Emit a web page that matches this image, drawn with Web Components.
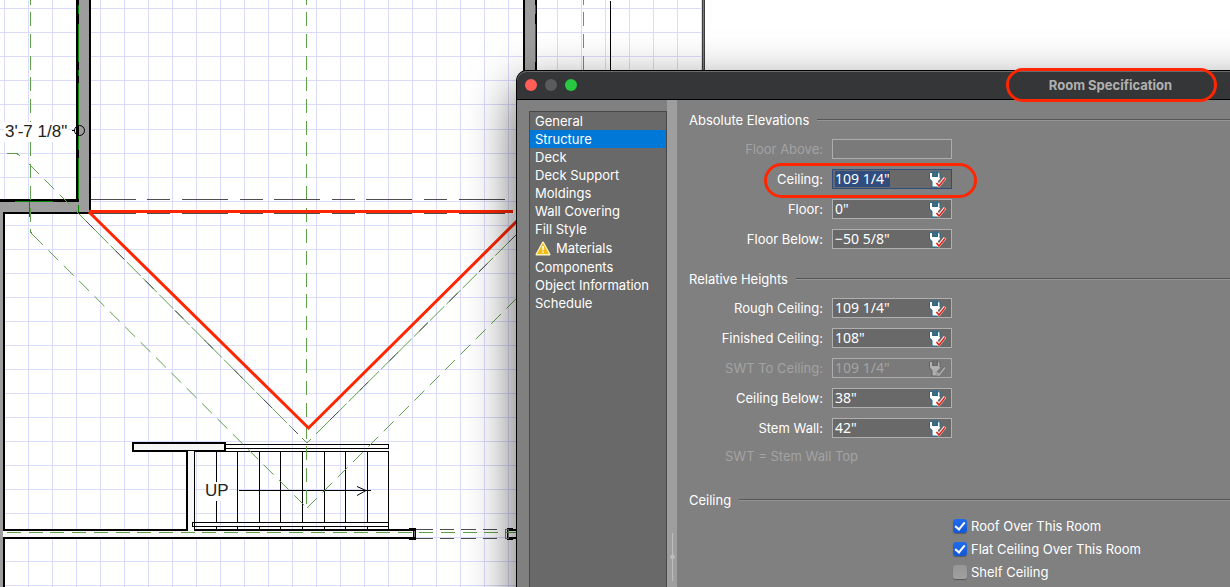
<!DOCTYPE html>
<html lang="en">
<head>
<meta charset="utf-8">
<title>Room Specification</title>
<style>
html, body { margin: 0; height: 100%; overflow: hidden; background: #fff; }
body { font: 400 13px/18px Inter, "Liberation Sans", sans-serif; color: #fff; }
</style>
</head>
<body>
<app-desktop>
  <floor-plan></floor-plan>
  <spec-window slot="window" heading="Room Specification">
    <side-list slot="nav">
      <side-item>General</side-item>
      <side-item current>Structure</side-item>
      <side-item>Deck</side-item>
      <side-item>Deck Support</side-item>
      <side-item>Moldings</side-item>
      <side-item>Wall Covering</side-item>
      <side-item>Fill Style</side-item>
      <side-item warning>Materials</side-item>
      <side-item>Components</side-item>
      <side-item>Object Information</side-item>
      <side-item>Schedule</side-item>
    </side-list>
    <spec-group heading="Absolute Elevations">
      <measure-field label="Floor Above:" value="" disabled plain></measure-field>
      <measure-field label="Ceiling:" value='109 1/4"' selected marked></measure-field>
      <measure-field label="Floor:" value='0"'></measure-field>
      <measure-field label="Floor Below:" value='−50 5/8"'></measure-field>
    </spec-group>
    <spec-group heading="Relative Heights">
      <measure-field label="Rough Ceiling:" value='109 1/4"'></measure-field>
      <measure-field label="Finished Ceiling:" value='108"'></measure-field>
      <measure-field label="SWT To Ceiling:" value='109 1/4"' disabled></measure-field>
      <measure-field label="Ceiling Below:" value='38"'></measure-field>
      <measure-field label="Stem Wall:" value='42"'></measure-field>
      <span slot="note">SWT = Stem Wall Top</span>
    </spec-group>
    <spec-group heading="Ceiling">
      <check-option label="Roof Over This Room" checked></check-option>
      <check-option label="Flat Ceiling Over This Room" checked></check-option>
      <check-option label="Shelf Ceiling"></check-option>
    </spec-group>
  </spec-window>
</app-desktop>

<script>
const attach = (el, html) => {
  const root = el.attachShadow({ mode: 'open' });
  const t = document.createElement('template');
  t.innerHTML = html;
  root.append(t.content.cloneNode(true));
  return root;
};

customElements.define('app-desktop', class extends HTMLElement {
  constructor() {
    super();
    attach(this, `
      <style>
        :host { display: block; position: relative; height: 100vh; overflow: hidden; }
        ::slotted(spec-window) { position: absolute; left: 517px; top: 71px; right: -474px; bottom: -60px; }
      </style>
      <slot></slot><slot name="window"></slot>`);
  }
});

customElements.define('floor-plan', class extends HTMLElement {
  constructor() {
    super();
    let grid = '';
    for (let i = 0; i < 30; i++) {
      const x = 4 + 24 * i + (i > 22 ? 1 : 0);
      if (x < 703) grid += `M${x}.5 0V1400`;
    }
    for (let i = 0; i < 58; i++) grid += `M0 ${8 + 24 * i + (i > 4 ? 1 : 0)}.5H702`;
    const treads = [216, 237, 259, 280, 302, 324, 345, 367].map(x => `M${x}.5 451V522M${x}.5 526V529`).join('');
    const dashes = y => [[91,136],[147,170],[182,228],[240,263],[274,320],[332,355],[366,412],[424,447],[459,505]]
      .map(([a, b]) => `M${a} ${y}.5H${b}`).join('');
    attach(this, `
      <style>
        :host { display: block; }
        svg { display: block; overflow: visible; }
        .g { stroke: #5f9f45; fill: none; stroke-dasharray: 14 7.7; }
        .g.long { stroke-dasharray: 20 3; }
        .d { stroke: #4d4d4d; fill: none; }
        .d.far { stroke-dasharray: 12 30; }
        .k { stroke: #000; fill: none; }
        text { font: 400 17px "Liberation Sans", sans-serif; fill: #222; }
      </style>
      <svg width="705" height="1400" role="img" aria-label="Floor plan">
        <g shape-rendering="crispEdges">
          <path d="${grid}" stroke="#dbdbfb"/>
          <path d="M702.5 0V1400M704.5 0V1400" stroke="#3b3d40"/><path d="M703.5 0V1400" stroke="#777a7e"/>
          <path class="k" d="M610.5 1V80"/>
          <path d="M79 0H89V212H0V202H79Z" fill="#9d9d9d"/>
          <path d="M76 0H79V202H0V199H76ZM89 0H91V214H5V531H3V212H89Z"/>
          <path d="M0 212H3V1400H0Z" fill="#9d9d9d"/>
          <path d="M525 0H535V80H525Z" fill="#9d9d9d"/><path d="M523 0H525V80H523ZM535 0H537V80H535Z"/>
          <path d="M78.5 5V14M78.5 24V62M78.5 70V76M78.5 83V125M78.5 136V150M78.5 158V199M78.5 205V212M535.5 5V14M535.5 24V62M15 201.5H53M29.5 201V217" stroke="#078307"/>
          <path d="M4 531H415V537H4Z" fill="#f7f7f7"/>
          <path d="M187 451H194V531H187Z" fill="#f7f7f7"/>
          <path d="M133 443H224V451H133Z" fill="#f5f5f5"/>
          <path d="M132 442H226V452H194V451H188V531H3V529H186V452H132ZM134 444V450H224V444ZM194 529H409V528H416V540H409V539H3V537H413V531H194Z" fill-rule="evenodd"/>
          <path d="M3 538H5V1400H3Z"/>
          <path class="k" d="M225 444.5H388.5V448.5H225M194.5 529V451.5H388.5V529M388 522.5H192.5V526.5H388${treads}"/>
          <path d="M207 482H229V501H207Z" fill="#fff"/>
          <path class="k" d="M239 490.5H371"/>
          <path class="d" d="M416 529.5H433M440 529.5H454M461 529.5H476M483 529.5H497M416 538.5H433M440 538.5H454M461 538.5H476M483 538.5H497"/>
          <path d="M507 528H513V529H518V531H509V537H518V539H513V540H507Z"/>
          <path d="M505.5 529.5H508V538.5H505.5ZM414.5 531V537" fill="none" stroke="#777"/>
          <path class="g" d="M7 532.5H518"/>
          <path class="g" stroke-dashoffset="9.5" d="M30.5 0V232L33 235M306.5 0V508M583.5 0V80"/>
          <path class="d" d="${dashes(199)}${dashes(213)}"/>
          <path class="g" d="M7 153.5H17L24 159"/>
          <path d="M4 122H68V142H4Z" fill="#fff"/>
        </g>
        <path class="k" d="M357 486.5L366 490.5L357 495.5"/>
        <path class="k" d="M72 130.5H75M79.500 125.500A5 5 0 1 0 79.500 135.500A5 5 0 1 0 79.500 125.500"/>
        <path class="g" d="M29 164L81 216M33 235L307 508M307 508L518 297"/>
        <path class="g long" d="M78 213L298 434M316 434L518 233M302 438L307 443L311 439"/>
        <path class="d far" d="M86 221L298 434M330 420L518 233"/>
        <path d="M89 211.500H513M89 212L308.500 428L518 220" fill="none" stroke="#ff2600" stroke-width="3"/>
        <text x="5" y="137">3'-7 1/8"</text>
        <text x="205" y="496">UP</text>
      </svg>`);
  }
});

customElements.define('spec-window', class extends HTMLElement {
  constructor() {
    super();
    attach(this, `
      <style>
        :host { display: flex; flex-direction: column; background: #808080; border-radius: 10px 10px 0 0;
          box-shadow: 0 0 0 1px #000, 0 18px 50px rgba(0,0,0,.65); }
        header { display: grid; grid-template-columns: 1fr auto 1fr; align-items: center; height: 28px;
          background: #353638; border-bottom: 1px solid #000; border-radius: 10px 10px 0 0;
          box-shadow: inset 0 1px #6b6c6d; }
        .lights { display: flex; gap: 8px; padding-left: 8px; }
        .lights button { width: 12px; height: 12px; padding: 0; border: 0; border-radius: 50%; background: #5b5b5e; }
        .lights .close { background: #ff5f57; }
        .lights .zoom { background: #28c840; }
        h1 { margin: 0; position: relative; font: 700 13px/18px Inter, sans-serif; color: #b0b0b1; }
        h1::after { content: ""; position: absolute; inset: -8px -45px -8px -43px; border: 3px solid #ff2600; border-radius: 18px; z-index: 1; }
        .body { flex: 1; display: flex; min-height: 0; }
        .nav { width: 138px; padding: 11px 0 0 12px; display: flex; }
        .split { width: 10px; background: #9e9e9e; display: flex; flex-direction: column; align-items: center; justify-content: end; }
        .split svg { display: block; margin-bottom: 66px; }
        main { flex: 1; padding: 10px 12px; display: flex; flex-direction: column; gap: 20px; }
      </style>
      <header>
        <div class="lights"><button class="close" aria-label="Close"></button><button aria-label="Minimize"></button><button class="zoom" aria-label="Zoom"></button></div>
        <h1></h1>
      </header>
      <div class="body">
        <div class="nav"><slot name="nav"></slot></div>
        <div class="split"><svg width="5" height="48"><path d="M2 0H3V48H2Z" fill="#bdbdbd"/><circle cx="2.5" cy="24" r="2.3" fill="#bdbdbd"/></svg></div>
        <main><slot></slot></main>
      </div>`).querySelector('h1').textContent = this.getAttribute('heading');
  }
});

customElements.define('side-list', class extends HTMLElement {
  constructor() {
    super();
    attach(this, `
      <style>
        :host { display: block; flex: 1; background: #696969; border: 1px solid #484848; border-bottom: 0; }
        nav { display: flex; flex-direction: column; }
      </style>
      <nav><slot></slot></nav>`);
  }
});

customElements.define('side-item', class extends HTMLElement {
  constructor() {
    super();
    const icon = this.hasAttribute('warning') ? `
      <svg width="16" height="15" viewBox="0 0 16 15" aria-hidden="true">
        <path d="M8 1.500L14.500 13.500H1.500Z" fill="#f7c51c" stroke="#fff3c0" stroke-width="2" stroke-linejoin="round"/>
        <path d="M8 2L14 13H2Z" fill="#f3bd18"/>
        <path d="M7 5H9L8.600 9.500H7.400ZM7.200 10.500H8.800V12H7.200Z" fill="#fffbe8"/>
      </svg>` : '';
    attach(this, `
      <style>
        :host { display: block; }
        :host([current]) { background: #0078d7; }
        a { display: flex; align-items: center; gap: 5px; height: 18px; padding-left: 5px; color: inherit; text-decoration: none; white-space: nowrap; }
        :host([warning]) a { height: 20px; }
      </style>
      <a href="#">${icon}<span><slot></slot></span></a>`);
  }
});

customElements.define('spec-group', class extends HTMLElement {
  constructor() {
    super();
    attach(this, `
      <style>
        :host { display: block; }
        header { display: flex; align-items: center; gap: 8px; height: 20px; margin-bottom: 9px; }
        h2 { margin: 0; font: inherit; white-space: nowrap; }
        i { flex: 1; height: 1px; margin-right: -12px; background: #555; border-bottom: 1px solid #959595; }
        .rows { display: flex; flex-direction: column; gap: 10px; }
        ::slotted(span) { display: block; margin: 10px 0 6px 36px; line-height: 16px; color: #a3a3a3; }
        ::slotted(check-option) { margin-bottom: -1px; }
      </style>
      <header><h2></h2><i></i></header>
      <div class="rows"><slot></slot></div>
      <slot name="note"></slot>`).querySelector('h2').textContent = this.getAttribute('heading');
  }
});

customElements.define('measure-field', class extends HTMLElement {
  constructor() {
    super();
    const off = this.hasAttribute('disabled');
    const blue = off ? '#656565' : '#1c6c92', body = off ? '#b0b0b0' : '#fff', red = off ? '#b0b0b0' : '#d9261c';
    const tool = this.hasAttribute('plain') ? '' : `
      <button aria-label="Default value" ${off ? 'disabled' : ''}>
        <svg width="17" height="17" viewBox="0 0 17 17" aria-hidden="true">
          <path d="M1 2L3 1V6H9V1L11 2V8L9 10V16H3V10L1 8Z" fill="${body}"/>
          <path d="M0.500 2V8L3 10.500V16H8.500M4 0.500V5.500H8V0.500M1 1.500H4M8 1.500L11 2V7" fill="none" stroke="${blue}"/>
          <path d="M4 0H8.500V5H4Z" fill="${blue}" opacity=".45"/>
          <path d="M7.500 11.500L10 14.500L16 7" fill="none" stroke="${off ? '#6d6d6d' : '#fbe9e9'}" stroke-width="3"/>
          <path d="M7.500 12L10 15L16 7.500" fill="none" stroke="${red}" stroke-width="1.500"/>
        </svg>
      </button>`;
    const root = attach(this, `
      <style>
        :host { display: grid; grid-template-columns: 134px 120px; column-gap: 9px; align-items: center; height: 20px; position: relative; }
        label { text-align: right; white-space: nowrap; }
        .box { box-sizing: border-box; display: flex; align-items: center; height: 20px; border: 1px solid #b0b0b0; background: #696969; padding: 0 5px 0 2px; }
        input { flex: 1; min-width: 0; height: 16px; padding: 0; border: 0; outline: 0; background: none; color: inherit;
          font: 400 14px/16px "Noto Sans", sans-serif; }
        input::selection { background: #2f4d7e; color: #fff; }
        button { display: flex; padding: 0; border: 0; background: none; }
        :host([disabled]) { color: #a3a3a3; }
        :host([disabled]) .box { background: #7a7a7a; border-color: #adadad; }
        :host([selected]) .box { border-color: #2f4d7e; }
        :host([marked])::after { content: ""; position: absolute; left: 75px; top: -6px; width: 207px; height: 29px; border: 3px solid #ff2600; border-radius: 18px; }
      </style>
      <label for="v"></label>
      <div class="box"><input id="v" type="text" ${off ? 'disabled' : ''}>${tool}</div>`);
    root.querySelector('label').textContent = this.getAttribute('label');
    root.querySelector('input').value = this.getAttribute('value');
  }
  connectedCallback() {
    if (this.hasAttribute('selected')) {
      const input = this.shadowRoot.querySelector('input');
      input.focus({ preventScroll: true });
      input.select();
    }
  }
});

customElements.define('check-option', class extends HTMLElement {
  constructor() {
    super();
    const root = attach(this, `
      <style>
        :host { display: flex; align-items: center; height: 14px; padding-left: 264px; }
        input { appearance: none; width: 14px; height: 14px; margin: 0 4px 0 0; border-radius: 3px; background: linear-gradient(#979797, #a0a0a0); box-shadow: 0 1px 1px rgba(0,0,0,.3); display: grid; place-items: center; }
        input:checked { background: linear-gradient(#1f6cec, #1257d6); }
        input:checked::after { content: ""; width: 4px; height: 8px; margin-bottom: 2px; border: solid #fff; border-width: 0 2px 2px 0; transform: rotate(40deg); }
        label { white-space: nowrap; }
      </style>
      <input type="checkbox" id="c" ${this.hasAttribute('checked') ? 'checked' : ''}><label for="c"></label>`);
    root.querySelector('label').textContent = this.getAttribute('label');
  }
});
</script>
</body>
</html>
